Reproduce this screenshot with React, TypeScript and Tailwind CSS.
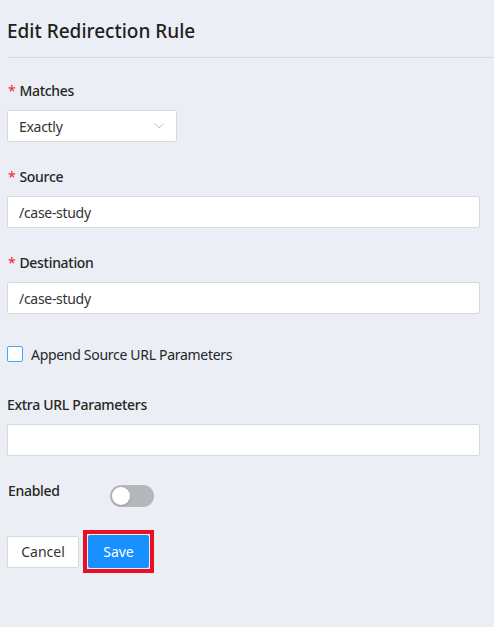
import React, { useState } from 'react';

function Label({ text, required }: { text: string; required?: boolean }) {
  return (
    <div className="h-[22px] leading-[22px] text-[14px] font-medium tracking-[-0.3px] text-[#262626] flex items-center">
      {required && <span className="text-[#f5222d] mr-[4px] pl-px text-[14px] font-normal">*</span>}
      {text}
    </div>
  );
}

function TextInput({ value }: { value: string }) {
  return (
    <div className="h-[32px] w-[473px] bg-white border border-[#d9d9d9] rounded-[2px] px-[11px] flex items-center text-[14px] tracking-[-0.3px] text-[#333]">
      {value}
    </div>
  );
}

export default function App() {
  const [enabled, setEnabled] = useState(false);
  const [append, setAppend] = useState(false);

  return (
    <div className="min-h-screen bg-[#ebeef4] font-['Noto_Sans',sans-serif] text-[#262626]">
      <div className="pl-[7px]">
        <div className="pt-[17px] pb-[12px] border-b border-[#d8dbe2]">
          <h1 className="text-[19px] leading-[28px] font-medium text-[#1f1f1f]">Edit Redirection Rule</h1>
        </div>

        <div className="mt-[22px]">
          <Label text="Matches" required />
          <div className="mt-[8px] h-[32px] w-[170px] bg-white border border-[#d9d9d9] rounded-[2px] pl-[11px] pr-[11px] flex items-center justify-between text-[14px] tracking-[-0.3px] text-[#333]">
            <span>Exactly</span>
            <svg width="10" height="6" viewBox="0 0 10 6" className="mr-px">
              <polyline points="0.5,0.5 5,5 9.5,0.5" fill="none" stroke="#bfbfbf" strokeWidth="1" />
            </svg>
          </div>
        </div>

        <div className="mt-[24px]">
          <Label text="Source" required />
          <div className="mt-[8px]">
            <TextInput value="/case-study" />
          </div>
        </div>

        <div className="mt-[24px]">
          <Label text="Destination" required />
          <div className="mt-[8px]">
            <TextInput value="/case-study" />
          </div>
        </div>

        <div className="mt-[29px] h-[22px] flex items-center" onClick={() => setAppend(!append)}>
          <div
            className={
              'w-[16px] h-[16px] rounded-[2px] border ' +
              (append ? 'bg-[#1890ff] border-[#1890ff]' : 'bg-white border-[#40a9ff]')
            }
          />
          <span className="ml-[8px] text-[14px] font-normal tracking-[-0.3px] text-[#262626]">
            Append Source URL Parameters
          </span>
        </div>

        <div className="mt-[29px]">
          <Label text="Extra URL Parameters" />
          <div className="mt-[8px]">
            <TextInput value="" />
          </div>
        </div>

        <div className="mt-[24px] flex items-start">
          <div className="w-[103px] h-[22px] leading-[22px] text-[14px] font-medium tracking-[-0.3px] text-[#262626] pl-px">
            Enabled
          </div>
          <button
            onClick={() => setEnabled(!enabled)}
            className={
              'mt-[5px] w-[44px] h-[22px] rounded-full relative ' + (enabled ? 'bg-[#1890ff]' : 'bg-[#b5b7bb]')
            }
          >
            <span
              className={
                'absolute top-[2px] w-[18px] h-[18px] rounded-full bg-white shadow-sm ' +
                (enabled ? 'left-[24px]' : 'left-[2px]')
              }
            />
          </button>
        </div>

        <div className="mt-[23px] flex items-center">
          <button className="h-[32px] w-[72px] bg-white border border-[#d9d9d9] rounded-[2px] text-[14px] text-[#333]">
            Cancel
          </button>
          <div className="ml-[4px] border-4 border-[#e81123] p-px">
            <button className="h-[33px] w-[61px] bg-[#1890ff] rounded-[2px] text-[14px] text-white">Save</button>
          </div>
        </div>
      </div>
    </div>
  );
}
